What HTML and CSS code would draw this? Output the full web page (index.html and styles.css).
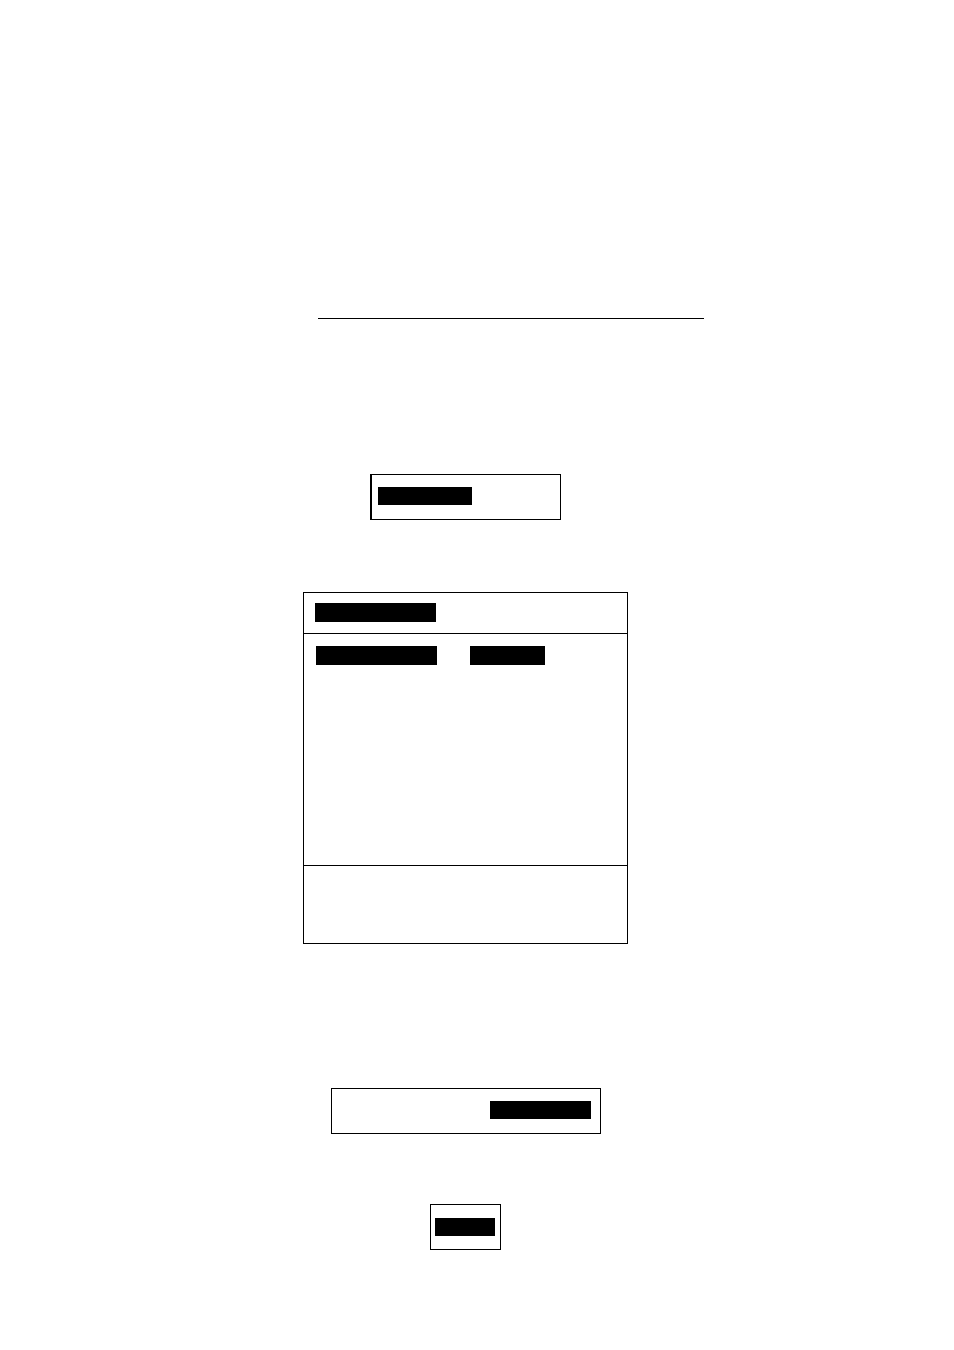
FILE: index.html
```
<!DOCTYPE html>
<html lang="en">
<head>
  <meta charset="UTF-8">
  <meta name="viewport" content="width=device-width, initial-scale=1">
  <link rel="stylesheet" href="styles.css">
</head>
<body>
  <main class="page">
    <hr class="rule">

    <div class="box box-start">
      <span class="bar"></span>
    </div>

    <section class="panel">
      <header class="panel-header">
        <span class="bar bar-wide"></span>
      </header>
      <div class="panel-body">
        <span class="bar bar-wide"></span>
        <span class="bar bar-value"></span>
      </div>
      <footer class="panel-footer"></footer>
    </section>

    <div class="box box-end">
      <span class="bar"></span>
    </div>

    <div class="box box-small">
      <span class="bar"></span>
    </div>
  </main>
</body>
</html>
```
FILE: styles.css
```
* { box-sizing: border-box; }
body {
  margin: 0;
  background: #fff;
  font-family: "Liberation Sans", Arial, sans-serif;
}

/* Page column */
.page {
  display: flex;
  flex-direction: column;
  align-items: center;
  width: 50%;
  min-width: 340px;
  margin-right: auto;
  margin-left: 227px;
  padding: 318px 0 100px;
}
.rule {
  align-self: flex-end;
  width: 386px;
  max-width: 100%;
  margin: 0 0 155px;
  border: 0;
  border-top: 1px solid #000;
}

/* Filled bars */
.bar {
  display: block;
  height: 18px;
  background: #000;
}
.panel .bar { height: 19px; }
.bar-wide { width: 121px; }
.bar-value { width: 75px; }

/* Small outlined boxes */
.box {
  display: flex;
  padding: 12px 6px 14px;
  border: 1px solid #000;
}
.box-start {
  width: 191px;
  margin-bottom: 72px;
  border-left-width: 2px;
}
.box-start .bar { width: 94px; }
.box-end {
  justify-content: flex-end;
  width: 270px;
  margin-bottom: 70px;
  padding-right: 9px;
}
.box-end .bar { width: 101px; }
.box-small {
  width: 71px;
  padding: 13px 5px 13px 4px;
}
.box-small .bar { width: 60px; }

/* Panel with header, body and footer */
.panel {
  width: 325px;
  margin-bottom: 144px;
  border: 1px solid #000;
}
.panel-header {
  padding: 10px 11px 11px;
  border-bottom: 1px solid #000;
}
.panel-body {
  display: flex;
  gap: 33px;
  min-height: 231px;
  padding: 12px;
}
.panel-footer {
  min-height: 78px;
  border-top: 1px solid #000;
}
```
